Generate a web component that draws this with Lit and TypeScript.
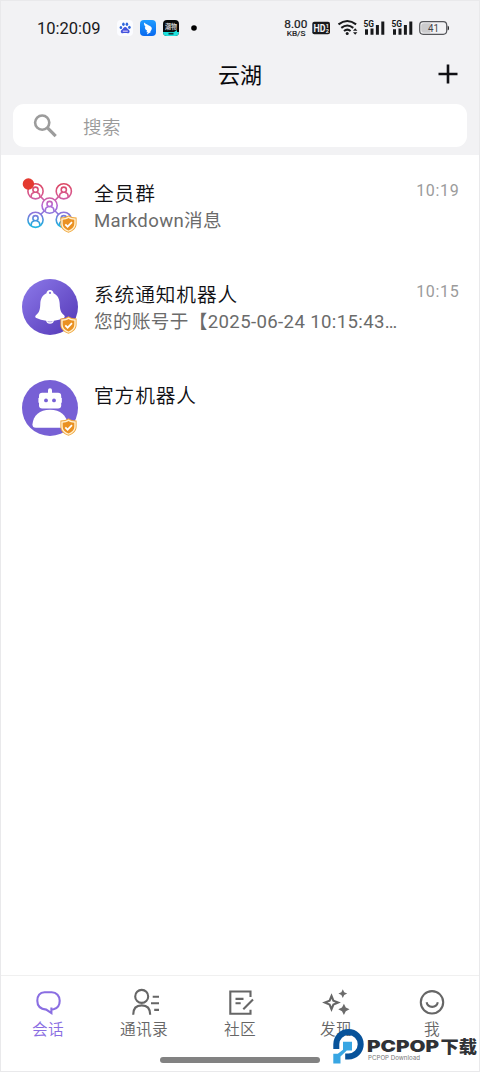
import { LitElement, html, css, svg, nothing } from "lit";
import { customElement, property, state } from "lit/decorators.js";
import { classMap } from "lit/directives/class-map.js";

const person = (x: number, y: number) => svg`
  <circle cx=${x} cy=${y} r="7.6"/>
  <circle cx=${x} cy=${y - 1.6} r="2.6"/>
  <path d="M${x - 4.3} ${y + 5.6}v-.9q0-3 3-3.5M${x + 4.3} ${y + 5.6}v-.9q0-3-3-3.5"/>`;

const avatars: Record<string, unknown> = {
  group: html`<svg width="56" height="56" viewBox="0 0 56 56" fill="none">
    <defs><linearGradient id="g" gradientUnits="userSpaceOnUse" x1="28" y1="6" x2="28" y2="50">
      <stop offset="0" stop-color="#dc4763"/><stop offset=".28" stop-color="#d65a94"/>
      <stop offset=".5" stop-color="#b56ad9"/><stop offset=".7" stop-color="#8078dc"/>
      <stop offset=".88" stop-color="#32a3dc"/><stop offset="1" stop-color="#20b8e2"/>
    </linearGradient></defs>
    <g stroke="url(#g)" stroke-width="1.6">
      ${person(13.5, 13.3)}${person(41.8, 13.3)}${person(27.6, 27.6)}${person(13.5, 41.8)}${person(41.8, 41.8)}
      <path d="M18.900 18.900l3.300 3.300M36.400 18.900l-3.300 3.300M18.900 36.300l3.300-3.300M36.400 36.300l-3.300-3.300"/>
    </g>
    <circle cx="6.400" cy="6" r="5.700" fill="#e43a30"/>
  </svg>`,
  bell: html`<svg width="56" height="56" viewBox="0 0 56 56">
    <defs><linearGradient id="b" x1="0" y1="0" x2="1" y2="1">
      <stop offset="0" stop-color="#8d7aea"/><stop offset="1" stop-color="#5236b5"/>
    </linearGradient></defs>
    <circle cx="28" cy="28" r="28" fill="url(#b)"/>
    <path fill="#fff" d="M28 11c2 0 3.500 1.300 3.500 3.200 4 1.700 6 5.600 6.200 10.500.2 6.500 1.200 9 4.400 11.600 1 .9.900 2.100-.4 2.700q-4.500 2.300-9.800 2.800c-.4 2-1.600 3-3.900 3s-3.500-1-3.900-3q-5.300-.5-9.800-2.800c-1.300-.6-1.400-1.800-.4-2.700 3.200-2.600 4.200-5.100 4.400-11.600.2-4.900 2.200-8.800 6.200-10.500C24.500 12.300 26 11 28 11z"/>
    <circle cx="28" cy="13.900" r="1.100" fill="#8572dc"/>
    <path d="M25.600 42.600q2.400.6 4.800 0" fill="none" stroke="#8b7ad6" stroke-width=".7"/>
  </svg>`,
  robot: html`<svg width="56" height="56" viewBox="0 0 56 56">
    <circle cx="28" cy="28" r="28" fill="#7760d5"/>
    <g fill="#fff">
      <rect x="26" y="8.300" width="4" height="8" rx="2"/>
      <rect x="17" y="12.800" width="22.200" height="15.600" rx="3.200"/>
      <rect x="16.400" y="17.800" width="23.400" height="5" rx=".6"/>
      <path d="M14 47.800q-3.700 0-3.500-3.500C11.300 35.500 17.500 29.800 28 29.800s16.700 5.700 17.500 14.500q.2 3.500-3.500 3.500z"/>
    </g>
    <circle cx="24" cy="20.400" r="1.900" fill="#7760d5"/><circle cx="32" cy="20.400" r="1.900" fill="#7760d5"/>
  </svg>`,
};

const shield = html`<svg width="17" height="18" viewBox="0 0 17 18">
  <path d="M8.500.3C10.500 1.900 13 2.400 16.600 2.500V8.500c0 4.600-3.300 7.600-8.100 9.300C3.700 16.100.4 13.100.4 8.500v-6C4 2.400 6.500 1.900 8.500.3z" fill="#f0a53a"/>
  <path d="M8.500 1.400C10.300 2.700 12.700 3.300 15.700 3.400V8.500c0 4-2.900 6.700-7.200 8.300C4.200 15.200 1.300 12.500 1.300 8.500V3.400C4.300 3.300 6.700 2.700 8.500 1.400z" fill="#fff0cf"/>
  <path d="M8.500 3C10 4 12 4.500 14.300 4.700v4c0 3.100-2.300 5.300-5.800 6.700-3.500-1.400-5.800-3.600-5.800-6.700v-4C5 4.500 7 4 8.500 3z" fill="#ea9122"/>
  <path d="M5.300 9.300l2.300 2.400 4.400-4.500" fill="none" stroke="#fff" stroke-width="1.700"/>
</svg>`;

const tabIcons: Record<string, unknown> = {
  chat: svg`<path d="M11.500 4.200h7.300c4.700 0 7.900 3.800 7.900 8.500 0 4.300-2.500 7.600-6.200 8.600l-2.100.3v3.500l-5.200-3.500C7 21 4.300 17.400 4.300 12.700c0-4.700 2.500-8.500 7.200-8.500zM18.400 21.200v-1.700"/>`,
  contacts: svg`<circle cx="12.700" cy="8.400" r="6.500"/><path d="M4.200 26.700c0-6 3.200-9.300 8.500-9.300s8.500 3.300 8.500 9.300M23.700 8.700h6.300M22 15.200h8M25.200 21.900h4.800"/>`,
  community: svg`<path d="M25.500 9V3.500H5.300v22.300h20.200v-4M10.500 10.900h8M10.500 15.300h5.200M18.300 21.200L28 11.400"/>`,
  discover: svg`<path stroke-linejoin="miter" d="M10.500 8l1.900 4.700 4.700 1.900-4.700 1.900-1.900 4.700-1.900-4.700-4.700-1.900 4.700-1.900z"/><path fill="#6b6b6b" stroke="none" d="M21.800 1.200l1.400 3 3 1.400-3 1.400-1.400 3-1.400-3-3-1.400 3-1.400zM22.900 15.700l1.900 3.700 3.700 1.900-3.700 1.900-1.900 3.700-1.900-3.700-3.700-1.900 3.700-1.900z"/>`,
  me: svg`<circle cx="15" cy="14.300" r="11.200"/><path d="M9.600 14.300q1 4.600 5.600 4.600t5.600-4.600"/>`,
};

@customElement("status-bar")
class StatusBar extends LitElement {
  static styles = css`
    :host { display: flex; align-items: center; height: 54px; padding-left: 36px; box-sizing: border-box; color: #18191b; font-family: Roboto, sans-serif; }
    .clock { width: 80px; font-size: 16.5px; line-height: 20px; padding-top: 1px; }
    .apps { display: flex; gap: 7px; align-items: center; flex: 1; }
    svg { display: block; flex: none; }
    .signals { margin-right: 30px; }
  `;
  render() {
    const sim = (x: number) => svg`<g transform="translate(${x} 0)">
      <text x="0" y="9.300" font-size="9" font-weight="700" textLength="10.500" lengthAdjust="spacingAndGlyphs">5G</text>
      <path d="M1.500 11.300h3v5.500h-3zM7 10.500h3v6.300H7zM12.400 7h3v9.800h-3zM17.800 3.500h3v13.300h-3z"/></g>`;
    return html`
      <div class="clock">10:20:09</div>
      <div class="apps">
        <svg width="16" height="16" viewBox="0 0 16 16"><rect width="16" height="16" rx="4" fill="#fbfcff"/>
          <g fill="#2d66dc"><ellipse cx="3.900" cy="7.500" rx="1.300" ry="1.600"/><ellipse cx="6.400" cy="4.300" rx="1.300" ry="1.700"/><ellipse cx="9.900" cy="4.300" rx="1.300" ry="1.700"/><ellipse cx="12.400" cy="7.300" rx="1.300" ry="1.600"/></g>
          <path d="M8.200 7c1.500 0 2.200 1.800 3.500 2.700 1.600 1.200 1.100 3.600-.8 3.500-1.800-.2-3.600-.2-5.300 0-2 .1-2.400-2.300-.8-3.500C6.100 8.800 6.700 7 8.200 7z" fill="#4254dd"/><path d="M5.800 11.200h5" stroke="#cdbcf6" stroke-width="1.300"/></svg>
        <svg width="16" height="16" viewBox="0 0 16 16"><defs><linearGradient id="s" x2="0" y2="1"><stop stop-color="#1f9cff"/><stop offset="1" stop-color="#0869ef"/></linearGradient></defs><rect width="16" height="16" rx="4" fill="url(#s)"/><path d="M4 2.500c2.500 2.400 6.700 3 7.700 5.300.5 1.300-.6 2.900-1.500 4l.7.200-4 2.500.8-2.400-1.300.1.7-1.700c-1.700-.5-2.300-2.100-2.200-3.500l.8.300C4.500 5.700 3.800 4.200 4 2.500z" fill="#fff"/></svg>
        <svg width="16" height="16" viewBox="0 0 16 16"><defs><clipPath id="c"><rect width="16" height="16" rx="4"/></clipPath></defs><g clip-path="url(#c)"><rect width="16" height="16" fill="#090b0c"/><path d="M0 12h11l3-2v2h2v4H0z" fill="#1de0dc"/></g><text x="2" y="9.200" font-size="6.500" font-weight="700" fill="#c8c8c8" font-family="Noto Sans CJK SC" textLength="12" lengthAdjust="spacingAndGlyphs">潮物</text><path d="M5.500 13.700h5" stroke="#123b3b" stroke-width="1.700"/></svg>
        <svg width="16" height="16" viewBox="0 0 16 16"><circle cx="8" cy="8" r="2.800"/></svg>
      </div>
      <svg class="signals" width="166" height="20" viewBox="283 18 166 20" fill="#18191b">
        <text x="284.300" y="28.200" font-size="10.500" stroke="#18191b" stroke-width=".2" textLength="23" lengthAdjust="spacingAndGlyphs">8.00</text>
        <text x="286.700" y="36" font-size="8" stroke="#18191b" stroke-width=".2" textLength="18.800" lengthAdjust="spacingAndGlyphs">KB/S</text>
        <rect x="312.300" y="21.800" width="17.700" height="12.500" rx="2"/>
        <g fill="#f2f2f4" font-weight="700"><text x="313.400" y="31.600" font-size="10" textLength="12" lengthAdjust="spacingAndGlyphs">HD</text><text x="325.700" y="27.500" font-size="5.500">1</text><text x="325.700" y="33.300" font-size="5.500">2</text></g>
        <g fill="none" stroke="#18191b" stroke-width="2.100"><path d="M338.500 24.300q8.800-6.600 17.600 0M341.300 27.800q6-4.600 12 0M344 31q3.300-2.600 6.600 0"/></g>
        <circle cx="347.200" cy="33.400" r="1.500"/><path d="M353 30.700l2.200-2.500 2.200 2.500zM353 32.200l2.200 2.500 2.200-2.500z"/>
        <g transform="translate(0 18)">${sim(363.5)}${sim(391.5)}</g>
        <rect x="419.700" y="21.700" width="27" height="12.600" rx="3.500" fill="#f2f2f4" stroke="#55565a" stroke-width="1.200"/>
        <path d="M424 23.200h6.500v9.600H424q-2.800 0-2.800-2.800v-4q0-2.800 2.800-2.800z" fill="#cbcbcd"/>
        <path d="M447.700 25.500q1.300.5 1.300 2.500t-1.300 2.500z"/>
        <text x="427.900" y="31.700" font-size="10.500" fill="#444548" textLength="11" lengthAdjust="spacingAndGlyphs">41</text>
      </svg>`;
  }
}

@customElement("chat-row")
class ChatRow extends LitElement {
  @property() avatar = "group";
  @property() name = "";
  @property() message = "";
  @property() time = "";
  static styles = css`
    :host { display: flex; height: 101.3px; padding: 1px 19.5px 0 20.5px; box-sizing: border-box; align-items: center; }
    .avatar { position: relative; width: 56px; height: 56px; margin-right: 16.5px; flex: none; }
    .avatar svg { display: block; overflow: visible; }
    .badge { position: absolute; left: 38px; top: 37.5px; }
    .body { flex: 1; min-width: 0; height: 56px; }
    .name { font-size: 19.7px; line-height: 27px; letter-spacing: .9px; font-weight: 350; color: #101014; margin-top: 3px; white-space: nowrap; }
    .message { font-size: 18.6px; line-height: 26px; letter-spacing: .36px; color: #6b6b6b; white-space: nowrap; overflow: hidden; text-overflow: ellipsis; width: 312px; }
    .time { align-self: flex-start; margin-top: 25px; font-size: 16px; line-height: 20px; letter-spacing: .7px; color: #9b9b9b; }
  `;
  render() {
    return html`<div class="avatar">${avatars[this.avatar]}<div class="badge">${shield}</div></div>
      <div class="body"><div class="name">${this.name}</div>
      ${this.message ? html`<div class="message">${this.message}</div>` : nothing}</div>
      <div class="time">${this.time}</div>`;
  }
}

@customElement("app-root")
class AppRoot extends LitElement {
  @state() private active = "chat";
  private chats = [
    { avatar: "group", name: "全员群", message: "Markdown消息", time: "10:19" },
    { avatar: "bell", name: "系统通知机器人", message: "您的账号于【2025-06-24 10:15:43…", time: "10:15" },
    { avatar: "robot", name: "官方机器人", message: "", time: "" },
  ];
  private tabs = [["chat", "会话"], ["contacts", "通讯录"], ["community", "社区"], ["discover", "发现"], ["me", "我"]];
  static styles = css`
    :host { display: flex; flex-direction: column; position: relative; height: 1072px; width: 480px; box-sizing: border-box; border: 1px solid #e9e9eb; background: #fff; overflow: hidden; font-family: Roboto, "Noto Sans CJK SC", sans-serif; }
    .top { background: #f2f2f4; height: 153.5px; flex: none; }
    .titlebar { display: grid; grid-template-columns: 60px 1fr 60px; align-items: center; height: 40px; }
    .title { grid-column: 2; text-align: center; font-size: 22px; line-height: 30px; color: #08080c; padding-top: 2px; }
    .add { justify-self: center; margin: 0 2px 2px 0; display: block; }
    .search { display: flex; align-items: center; height: 43px; margin: 9px 12px 0; border-radius: 11px; background: #fff; color: #9a9a9a; font-size: 18.5px; letter-spacing: .5px; font-weight: 350; }
    .search svg { margin: 0 25px 0 19px; }
    .list { flex: 1; }
    .tabs { display: flex; height: 96px; box-sizing: border-box; border-top: 1px solid #f0f0f0; flex: none; flex-direction: column; align-items: center; }
    .items { display: grid; grid-template-columns: repeat(5, 1fr); width: 480px; height: 81px; }
    .tab { display: flex; flex-direction: column; align-items: center; padding-top: 12px; color: #666; font-size: 15.7px; line-height: 23px; letter-spacing: .3px; font-weight: 350; }
    .tab.on { color: #8a6ee2; }
    .tab svg { display: block; fill: none; stroke: currentColor; stroke-width: 2.100; }
    .indicator { width: 160px; height: 6px; border-radius: 3px; background: #828282; }
    .mark { position: absolute; left: 329px; top: 1025px; }
  `;
  render() {
    return html`
      <div class="top"><status-bar></status-bar>
        <div class="titlebar"><div class="title">云湖</div>
          <svg class="add" width="20" height="20" viewBox="0 0 20 20"><path d="M10 .5v19M.5 10h19" stroke="#101014" stroke-width="2.600"/></svg></div>
        <div class="search"><svg width="26" height="26" viewBox="0 0 26 26" fill="none" stroke="#9c9c9c"><circle cx="10.200" cy="9.600" r="7.100" stroke-width="2.600"/><path d="M15.300 14.700l8.400 8.400" stroke-width="3.200"/></svg>搜索</div>
      </div>
      <div class="list">${this.chats.map((c) => html`<chat-row .avatar=${c.avatar} .name=${c.name} .message=${c.message} .time=${c.time}></chat-row>`)}</div>
      <div class="tabs"><div class="items">${this.tabs.map(([id, label]) => html`
        <div class=${classMap({ tab: true, on: id === this.active })} @click=${() => (this.active = id)}>
          <svg width="30" height="30" viewBox="0 0 30 30">${tabIcons[id]}</svg>${label}</div>`)}</div>
        <div class="indicator"></div></div>
      <svg class="mark" width="150" height="42" viewBox="330 1026 150 42">
        <path d="M336.300 1049v-4.800a12.200 12.200 0 1 1 12.200 12.200h-3.300" fill="none" stroke="#07529a" stroke-width="6"/>
        <path d="M343 1041.700h9v8.800h-5.200l-6.300 6v7h-7.200v-9.700h4.500l5.200-4z" fill="#38a6e3"/>
        <g fill="#303236"><text x="367" y="1052.200" font-family="Inter" font-weight="900" font-size="16" textLength="72" lengthAdjust="spacingAndGlyphs">PCPOP</text>
        <text x="440.500" y="1052.600" font-family="Noto Sans CJK SC" font-weight="900" font-size="16.500" textLength="36.500" lengthAdjust="spacingAndGlyphs">下载</text></g>
        <text x="368" y="1059.800" font-family="Inter" font-size="5.500" fill="#777" textLength="52" lengthAdjust="spacingAndGlyphs">PCPOP Download</text>
      </svg>`;
  }
}
